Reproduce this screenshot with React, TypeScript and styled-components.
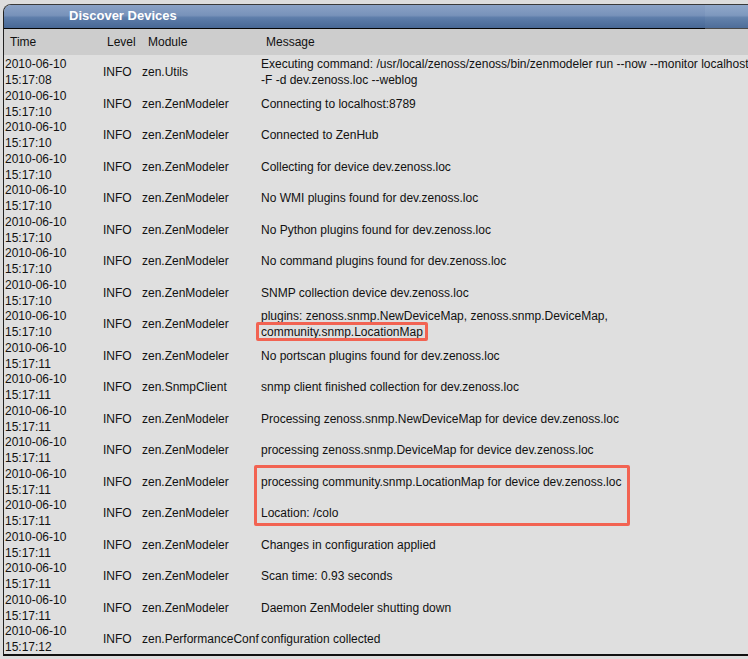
import React from 'react';
import styled, { createGlobalStyle } from 'styled-components';

const GlobalStyle = createGlobalStyle`
  html, body {
    margin: 0;
    padding: 0;
    background: #dddddd;
  }
  body {
    font-family: "Liberation Sans", Arial, Helvetica, sans-serif;
    color: #111;
  }
`;

const COLS = '96px 40px 118px 1fr';

const Page = styled.div`
  width: 748px;
  height: 659px;
  overflow: hidden;
  box-sizing: border-box;
  padding: 4px 0 0 3px;
  background: #dddddd;
`;

const Window = styled.div`
  width: 820px;
  border-left: 1px solid #222;
  border-top: 1px solid #3a3a3a;
  border-bottom: 2px solid #111;
  border-top-left-radius: 8px;
  overflow: hidden;
  background: #dfdfdf;
`;

const TitleBar = styled.div`
  display: flex;
  height: 24px;
`;

const TitleMain = styled.div`
  width: 701px;
  box-sizing: border-box;
  border-bottom: 1px solid #050505;
  padding: 3px 0 0 65px;
  background: linear-gradient(#8aa2c6 0%, #7892ba 45%, #5d7daa 55%, #486895 100%);
  color: #fff;
  font-weight: bold;
  font-size: 13px;
  line-height: 16px;
`;

const TitleTail = styled.div`
  flex: 1;
  border-bottom: 1px solid #4a4a4a;
  background: linear-gradient(#90a8ca 0%, #7e98be 45%, #6382ac 55%, #4e6d99 100%);
`;

const HeaderRow = styled.div`
  display: grid;
  grid-template-columns: ${COLS};
  height: 26px;
  box-sizing: border-box;
  padding-top: 0.5px;
  align-items: center;
  background: #cdcdcd;
  font-size: 12px;
  line-height: 16px;
`;

const HeadCell = styled.div<{ $pad: number }>`
  padding-left: ${(p) => p.$pad}px;
  white-space: nowrap;
`;

const Body = styled.div`
  display: flex;
  flex-direction: column;
`;

const Row = styled.div`
  display: grid;
  grid-template-columns: ${COLS};
  height: 31.5px;
  font-size: 12px;
  line-height: 16px;
`;

const Cell = styled.div<{ $pad: number }>`
  position: relative;
  display: flex;
  align-items: center;
  box-sizing: border-box;
  padding-top: 1px;
  padding-left: ${(p) => p.$pad}px;
  white-space: pre;
`;

const Mark = styled.span`
  position: relative;
  &::after {
    content: '';
    position: absolute;
    top: -3px;
    bottom: -2px;
    left: -5px;
    right: -5px;
    border: 3px solid #f26352;
    border-radius: 2px;
  }
`;

const BlockMark = styled.div`
  position: absolute;
  top: 0.5px;
  left: -4px;
  width: 376px;
  height: 61px;
  box-sizing: border-box;
  border: 3px solid #f26352;
  border-radius: 2px;
  pointer-events: none;
`;

type Entry = {
  time: string;
  module: string;
  message: React.ReactNode;
  block?: boolean;
};

const rows: Entry[] = [
  {
    time: '15:17:08',
    module: 'zen.Utils',
    message:
      'Executing command: /usr/local/zenoss/zenoss/bin/zenmodeler run --now --monitor localhost\n-F -d dev.zenoss.loc --weblog',
  },
  { time: '15:17:10', module: 'zen.ZenModeler', message: 'Connecting to localhost:8789' },
  { time: '15:17:10', module: 'zen.ZenModeler', message: 'Connected to ZenHub' },
  { time: '15:17:10', module: 'zen.ZenModeler', message: 'Collecting for device dev.zenoss.loc' },
  { time: '15:17:10', module: 'zen.ZenModeler', message: 'No WMI plugins found for dev.zenoss.loc' },
  { time: '15:17:10', module: 'zen.ZenModeler', message: 'No Python plugins found for dev.zenoss.loc' },
  { time: '15:17:10', module: 'zen.ZenModeler', message: 'No command plugins found for dev.zenoss.loc' },
  { time: '15:17:10', module: 'zen.ZenModeler', message: 'SNMP collection device dev.zenoss.loc' },
  {
    time: '15:17:10',
    module: 'zen.ZenModeler',
    message: (
      <span>
        {'plugins: zenoss.snmp.NewDeviceMap, zenoss.snmp.DeviceMap,\n'}
        <Mark>community.snmp.LocationMap</Mark>
      </span>
    ),
  },
  { time: '15:17:11', module: 'zen.ZenModeler', message: 'No portscan plugins found for dev.zenoss.loc' },
  { time: '15:17:11', module: 'zen.SnmpClient', message: 'snmp client finished collection for dev.zenoss.loc' },
  { time: '15:17:11', module: 'zen.ZenModeler', message: 'Processing zenoss.snmp.NewDeviceMap for device dev.zenoss.loc' },
  { time: '15:17:11', module: 'zen.ZenModeler', message: 'processing zenoss.snmp.DeviceMap for device dev.zenoss.loc' },
  {
    time: '15:17:11',
    module: 'zen.ZenModeler',
    message: 'processing community.snmp.LocationMap for device dev.zenoss.loc',
    block: true,
  },
  { time: '15:17:11', module: 'zen.ZenModeler', message: 'Location: /colo' },
  { time: '15:17:11', module: 'zen.ZenModeler', message: 'Changes in configuration applied' },
  { time: '15:17:11', module: 'zen.ZenModeler', message: 'Scan time: 0.93 seconds' },
  { time: '15:17:11', module: 'zen.ZenModeler', message: 'Daemon ZenModeler shutting down' },
  { time: '15:17:12', module: 'zen.PerformanceConf', message: 'configuration collected' },
];

export default function App() {
  return (
    <>
      <GlobalStyle />
      <Page>
        <Window>
          <TitleBar>
            <TitleMain>Discover Devices</TitleMain>
            <TitleTail />
          </TitleBar>
          <HeaderRow>
            <HeadCell $pad={6}>Time</HeadCell>
            <HeadCell $pad={7}>Level</HeadCell>
            <HeadCell $pad={8}>Module</HeadCell>
            <HeadCell $pad={8}>Message</HeadCell>
          </HeaderRow>
          <Body>
            {rows.map((r, i) => (
              <Row key={i}>
                <Cell $pad={1}>{'2010-06-10\n' + r.time}</Cell>
                <Cell $pad={3}>INFO</Cell>
                <Cell $pad={2}>{r.module}</Cell>
                <Cell $pad={3}>
                  {r.message}
                  {r.block && <BlockMark />}
                </Cell>
              </Row>
            ))}
          </Body>
        </Window>
      </Page>
    </>
  );
}
